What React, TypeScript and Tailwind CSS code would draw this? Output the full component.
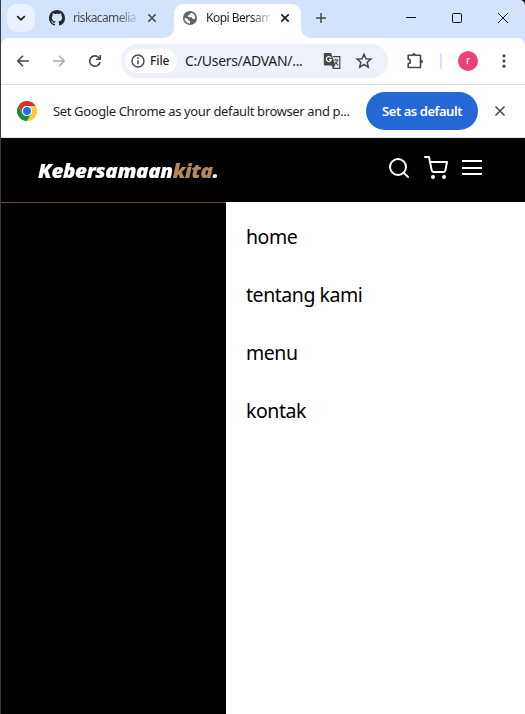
import type { ReactNode } from 'react';

function Icon({ size = 20, box = '0 0 20 20', className = '', children }: { size?: number; box?: string; className?: string; children: ReactNode }) {
  return (
    <svg width={size} height={size} viewBox={box} className={`shrink-0 ${className}`} fill="none" stroke="currentColor">
      {children}
    </svg>
  );
}

function GithubMark() {
  return (
    <Icon size={16} box="0 0 16 16" className="text-[#24292f]">
      <path
        fill="currentColor"
        stroke="none"
        d="M8 0C3.58 0 0 3.58 0 8c0 3.54 2.29 6.53 5.47 7.59.4.07.55-.17.55-.38 0-.19-.01-.82-.01-1.49-2.01.37-2.53-.49-2.69-.94-.09-.23-.48-.94-.82-1.13-.28-.15-.68-.52-.01-.53.63-.01 1.08.58 1.23.82.72 1.21 1.87.87 2.33.66.07-.52.28-.87.51-1.07-1.78-.2-3.64-.89-3.64-3.95 0-.87.31-1.59.82-2.15-.08-.2-.36-1.02.08-2.12 0 0 .67-.21 2.2.82.64-.18 1.32-.27 2-.27s1.36.09 2 .27c1.53-1.04 2.2-.82 2.2-.82.44 1.1.16 1.92.08 2.12.51.56.82 1.27.82 2.15 0 3.07-1.87 3.75-3.65 3.95.29.25.54.73.54 1.48 0 1.07-.01 1.93-.01 2.2 0 .21.15.46.55.38A8.01 8.01 0 0 0 16 8c0-4.42-3.58-8-8-8z"
      />
    </Icon>
  );
}

function TabStrip() {
  return (
    <div className="flex h-[38px] items-end rounded-tr-[5px] bg-[#d3e3fd]">
      <div className="flex h-[38px] w-[163px] items-start pl-1.5 pt-1">
        <button className="flex size-7 items-center justify-center rounded-[10px] bg-[#e9f1fe] text-[#1f1f1f]">
          <Icon size={10} box="0 0 10 10"><path d="M1.2 3.2 5 6.8 8.8 3.2" strokeWidth="1.8" /></Icon>
        </button>
        <div className="ml-3.5 mt-1.5 flex h-4 items-center">
          <GithubMark />
          <span className="ml-2 w-[63px] whitespace-nowrap bg-linear-to-r from-[#474747] from-70% to-[#474747]/20 bg-clip-text text-[12px] leading-4 tracking-[-0.62px] text-transparent">
            riskacamelia
          </span>
          <Icon size={10} box="0 0 10 10" className="ml-[11px] text-[#474747]"><path d="m1.3 1.3 7.4 7.4m0-7.4L1.3 8.7" strokeWidth="1.6" /></Icon>
        </div>
      </div>
      <div className="size-2.5 bg-white"><div className="size-full rounded-br-[10px] bg-[#d3e3fd]" /></div>
      <div className="flex h-[34px] w-[127px] items-start rounded-t-[9px] bg-white pl-2 pt-1.5">
        <Icon size={16} box="0 0 24 24" className="text-[#5f6368]">
          <circle cx="12" cy="12" r="10.5" fill="currentColor" stroke="none" />
          <path fill="#fff" stroke="none" d="M3.800 11.500 8.500 13l1 2.500 2.500 1v4A8.500 8.500 0 0 1 3.800 11.500ZM13 4.200l-.5 2.300-3 1-1 2.500 3 1h3l1.500 2.500 2.500.5 1.600-2.500A8.500 8.500 0 0 0 13 4.200Z" />
        </Icon>
        <span className="ml-2 w-[64px] whitespace-nowrap bg-linear-to-r from-[#1f1f1f] from-70% to-[#1f1f1f]/15 bg-clip-text text-[12px] leading-4 tracking-[-0.5px] text-transparent">
          Kopi Bersam
        </span>
        <Icon size={10} box="0 0 10 10" className="ml-2.5 mt-[3px] text-[#1f1f1f]"><path d="m1.300 1.300 7.400 7.400m0-7.400L1.300 8.700" strokeWidth="1.700" /></Icon>
      </div>
      <div className="size-2.5 bg-white"><div className="size-full rounded-bl-[10px] bg-[#d3e3fd]" /></div>
      <div className="flex h-[38px] flex-1 items-start pt-[13px] text-[#474747]">
        <Icon size={10} box="0 0 10 10" className="ml-[5px]"><path d="M5 0v10M0 5h10" strokeWidth="1.500" /></Icon>
        <Icon size={10} box="0 0 10 10" className="ml-20 text-[#111]"><path d="M0 4.500h10" strokeWidth="1" /></Icon>
        <Icon size={10} box="0 0 10 10" className="ml-9 text-[#111]"><rect x=".5" y=".5" width="9" height="9" rx="1" /></Icon>
        <Icon size={10} box="0 0 10 10" className="ml-9 text-[#111]"><path d="m0 0 10 10M10 0 0 10" /></Icon>
      </div>
    </div>
  );
}

function Toolbar() {
  return (
    <div className="bg-[#d3e3fd]">
      <div className="flex h-[46px] items-center rounded-t-[8px] bg-white pl-3 text-[#474747]">
        <Icon><path d="M16 10H5M10 4.800 4.800 10l5.200 5.200" strokeWidth="1.600" /></Icon>
        <Icon className="ml-4 text-[#ababab]"><path d="M4 10h11M10 4.800l5.200 5.200-5.200 5.200" strokeWidth="1.600" /></Icon>
        <Icon className="ml-4"><path d="M15 11a5.200 5.200 0 1 1-1.300-4.500L15.200 8M15.300 4v4.200h-4.200" strokeWidth="1.600" /></Icon>
        <div className="ml-4 flex h-[34px] w-[267px] items-center rounded-full bg-[#ecf1fa] pl-1">
          <div className="flex h-6 w-[52px] items-center rounded-full bg-white pl-1.5">
            <Icon size={14} box="0 0 14 14"><circle cx="7" cy="7" r="6" strokeWidth="1.400" /><path d="M7 6.200v4M7 3.600v1.500" strokeWidth="1.500" /></Icon>
            <span className="ml-[5px] text-[12px] font-medium leading-4 tracking-[-0.1px] text-[#1f1f1f]">File</span>
          </div>
          <span className="ml-2 w-[126px] whitespace-nowrap text-[14px] leading-5 tracking-[-0.32px] text-[#1f1f1f]">C:/Users/ADVAN/...</span>
          <Icon size={18} box="0 0 18 18" className="ml-3">
            <path d="M10 4.700h6.800v11.700H9.800" strokeWidth="1.200" />
            <path d="M1.800 1h6.300l4.300 12.500H1.800a1 1 0 0 1-1-1V2a1 1 0 0 1 1-1ZM8.500 13.500h3.500l-2 3.300Z" fill="currentColor" stroke="none" />
            <path d="M8 5.700a2.500 2.500 0 1 0 .3 2H6" stroke="#fff" strokeWidth="1.200" />
            <path d="M10.800 8h4.700M13 6.800V8M14.700 8c-.4 2-1.400 3.200-2.500 4.200M12.300 9.800l2.800 3.500" strokeWidth="1.100" />
          </Icon>
          <Icon size={18} box="0 0 18 18" className="ml-[13.500px]"><path d="m9 2.200 2 4.500 4.900.4-3.700 3.200 1.100 4.800L9 12.500l-4.300 2.600 1.100-4.800-3.700-3.200 4.900-.4Z" strokeWidth="1.500" /></Icon>
        </div>
        <Icon className="ml-[17px]"><path d="M3.200 4.300h4.600v-.5h2v.5h5.700v12.200H3.200v-3.800l2-.6V9l-2-.7Z" strokeWidth="1.600" strokeLinejoin="round" /><path d="M7.800 3.700a1.200 1.200 0 0 1 2.400 0ZM16.300 9.200a1.200 1.200 0 0 1 0 2.600Z" fill="currentColor" strokeWidth="1" /></Icon>
        <span className="ml-[15px] h-4 w-0.5 rounded bg-[#d3e3fd]" />
        <span className="ml-4 flex size-5 items-center justify-center rounded-full bg-[#ec407a] pb-px font-['Roboto',sans-serif] text-[11px] leading-none text-white">r</span>
        <Icon className="ml-4"><g fill="currentColor" stroke="none"><circle cx="10" cy="4.800" r="1.600" /><circle cx="10" cy="10" r="1.600" /><circle cx="10" cy="15.200" r="1.600" /></g></Icon>
      </div>
    </div>
  );
}

function ChromeLogo() {
  return (
    <Icon size={20} box="0 0 48 48">
      <g stroke="none">
        <path fill="#da3025" d="M3.200 12a24 24 0 0 1 41.600 0H24a12 12 0 0 0-10.400 18Z" />
        <path fill="#fcc934" d="M44.800 12A24 24 0 0 1 24 48l10.400-18A12 12 0 0 0 24 12Z" />
        <path fill="#1e8e3e" d="M24 48A24 24 0 0 1 3.200 12l10.400 18a12 12 0 0 0 20.800 0Z" />
        <circle cx="24" cy="24" r="12" fill="#fff" />
        <circle cx="24" cy="24" r="9.500" fill="#1a73e8" />
      </g>
    </Icon>
  );
}

function DefaultBrowserBar() {
  return (
    <div className="flex h-[54px] items-center border-y border-[#dfe0e2] bg-white pl-4">
      <ChromeLogo />
      <span className="ml-4 w-[298px] whitespace-nowrap text-[13px] leading-5 tracking-[-0.37px] text-[#1f1f1f]">
        Set Google Chrome as your default browser and p...
      </span>
      <button className="ml-[15px] h-[38px] w-28 whitespace-nowrap rounded-full bg-[#2468d6] text-[13px] font-semibold leading-5 tracking-[-0.45px] text-white">
        Set as default
      </button>
      <Icon size={12} box="0 0 12 12" className="ml-4 text-[#474747]"><path d="m1.500 1.500 9 9m0-9-9 9" strokeWidth="1.500" /></Icon>
    </div>
  );
}

function SiteHeader() {
  return (
    <header className="flex h-16 items-center bg-linear-to-b from-[#111] to-black to-10% pb-1 pl-[37px] text-white">
      <a className="mt-1.5 w-[181px] origin-left scale-x-[1.08] whitespace-nowrap font-['Open_Sans',sans-serif] text-[19px] font-extrabold italic leading-6 tracking-[-0.3px] [-webkit-text-stroke:0.15px]">
        Kebersamaan<span className="text-[#b6895b]">kita</span>.
      </a>
      <div className="ml-[168px] flex gap-3">
        <Icon size={24} box="0 0 24 24"><g strokeWidth="2" strokeLinecap="round"><circle cx="11" cy="11" r="8" /><path d="m21 21-4.350-4.350" /></g></Icon>
        <Icon size={24} box="0 0 24 24" className="relative left-px"><g strokeWidth="2" strokeLinecap="round" strokeLinejoin="round"><circle cx="9" cy="21" r="1" /><circle cx="20" cy="21" r="1" /><path d="M1 1h4l2.680 13.390a2 2 0 0 0 2 1.610h9.720a2 2 0 0 0 2-1.610L23 6H6" /></g></Icon>
        <Icon size={24} box="0 0 24 24"><path d="M3 5h20M3 12h20M3 18h20" strokeWidth="2" /></Icon>
      </div>
    </header>
  );
}

const links = ['home', 'tentang kami', 'menu', 'kontak'];

export default function App() {
  return (
    <div className="flex h-[714px] w-[525px] flex-col overflow-hidden border-l border-[#3a3b3d] bg-black font-['Noto_Sans',sans-serif]">
      <TabStrip />
      <Toolbar />
      <DefaultBrowserBar />
      <SiteHeader />
      <main className="flex flex-1">
        <div className="w-[225px] border-t border-[#6b4a33] bg-black" />
        <nav className="flex flex-1 flex-col gap-[30px] bg-white pl-5 pt-[21px]">
          {links.map((label) => (
            <a key={label} className="h-7 text-[19.5px] leading-7 tracking-[-0.45px] text-black">{label}</a>
          ))}
        </nav>
      </main>
    </div>
  );
}
